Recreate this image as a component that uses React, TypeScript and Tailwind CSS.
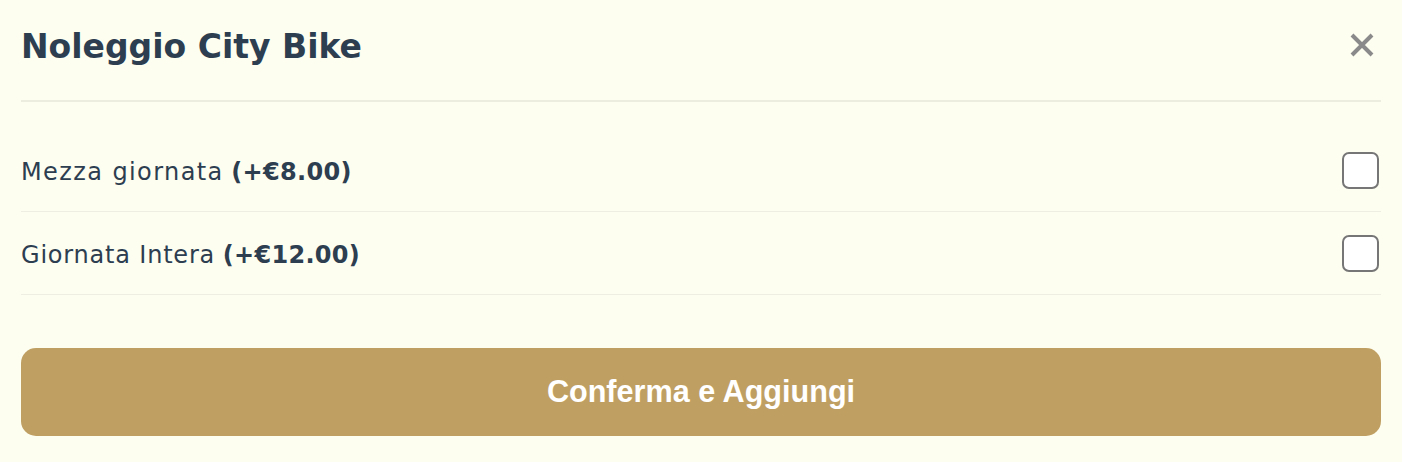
import React from "react";

const poppins = { fontFamily: "'DejaVu Sans', Inter, sans-serif" };

function Row({ label, price, tracking }: { label: string; price: string; tracking: string }) {
  return (
    <div className="flex h-[83px] items-center justify-between border-b border-[#eeeee2]">
      <span className="pt-[3px] text-[24px] text-[#2c3e50]" style={poppins}>
        <span className={tracking}>{label}</span>{" "}
        <span className="font-bold tracking-[0.3px]">{price}</span>
      </span>
      <span className="mr-[2px] block h-[37px] w-[37px] rounded-[7px] border-2 border-[#767676] bg-white" />
    </div>
  );
}

export default function App() {
  return (
    <div className="min-h-[462px] w-full bg-[#fdfdf0] px-[21px]">
      <div className="flex items-center justify-between border-b-2 border-[#ededdf] pt-[22px] pb-[28px]">
        <h2 className="text-[33px] leading-[50px] font-bold text-[#2c3e50]" style={poppins}>
          Noleggio City Bike
        </h2>
        <svg width="24" height="24" viewBox="0 0 24 24" className="mr-[7px] mb-[4px]">
          <path d="M2 2 L22 22 M22 2 L2 22" stroke="#8a8a8a" strokeWidth="4" />
        </svg>
      </div>
      <div className="pt-[27px]">
        <Row label="Mezza giornata" price="(+€8.00)" tracking="tracking-[1.4px]" />
        <Row label="Giornata Intera" price="(+€12.00)" tracking="tracking-[0.8px]" />
      </div>
      <div className="pt-[53px]">
        <button
          className="flex h-[88px] w-full items-center justify-center rounded-[15px] bg-[#c0a062] text-[30.6px] font-bold text-white"
          style={{ fontFamily: "'Liberation Sans', Arial, sans-serif" }}
        >
          Conferma e Aggiungi
        </button>
      </div>
    </div>
  );
}
